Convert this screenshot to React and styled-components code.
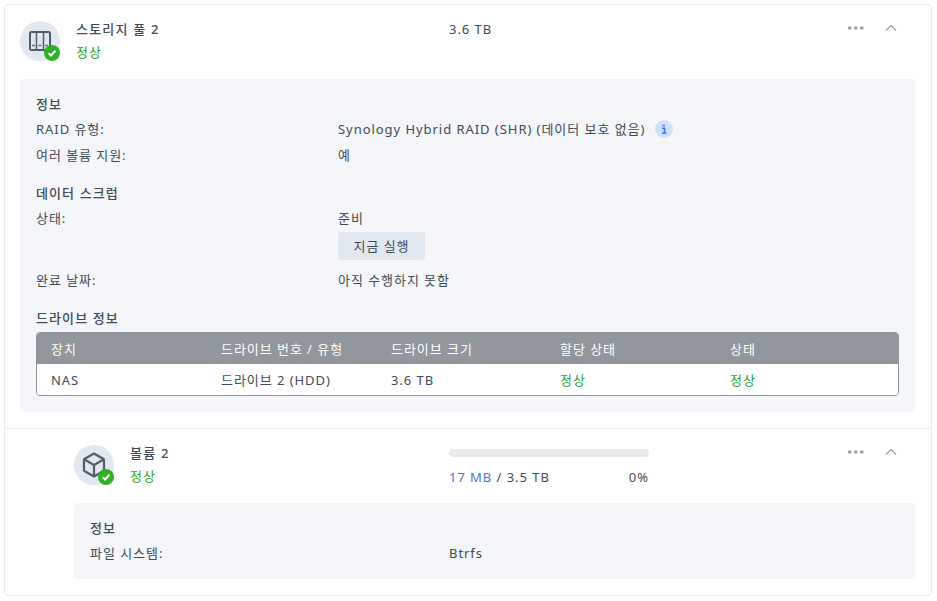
import React from "react";
import styled, { createGlobalStyle } from "styled-components";

const Global = createGlobalStyle`
  html, body { margin: 0; padding: 0; background: #fff; }
  body { font-family: "Noto Sans", "Noto Sans CJK KR", sans-serif; font-size: 13px; letter-spacing: 0.95px; color: #414b55; }
`;
const Page = styled.div`
  width: 937px; height: 601px; box-sizing: border-box; padding: 4px 5px 5px 4px; overflow: hidden;
`;
const Card = styled.div`
  height: 592px; box-sizing: border-box; border: 1px solid #e6ebf0; border-radius: 4px;
  display: flex; flex-direction: column;
`;
const Section = styled.section`
  padding: 16px 16px 16px ${p => p.$indent}px;
  & + & { border-top: 1px solid #e9ecf0; }
`;
const Head = styled.div`
  display: grid; grid-template-columns: ${p => p.$info}px 200px 1fr; height: 58px; align-items: start;
`;
const Identity = styled.div`display: flex; gap: 16px;`;
const IconWrap = styled.div`
  position: relative; width: 40px; height: 40px; border-radius: 50%; background: #e2e8ef; flex: none;
  display: flex; align-items: center; justify-content: center;
`;
const Badge = styled.span`
  position: absolute; right: 0; bottom: 0; width: 16px; height: 16px; border-radius: 50%; background: #2fb124;
  display: flex; align-items: center; justify-content: center;
`;
const Names = styled.div`display: flex; flex-direction: column; gap: 5px; margin-top: -1px;`;
const Title = styled.div`font-weight: 500; letter-spacing: 1.2px; line-height: 18px; color: #414b55;`;
const Green = styled.div`color: #28a61e; line-height: 18px;`;
const SizeText = styled.div`line-height: 18px; margin-top: -1px;`;
const Usage = styled.div`display: flex; flex-direction: column; gap: 11px; padding-top: 4px;`;
const Track = styled.div`width: 200px; height: 8px; border-radius: 4px; background: #e8e9eb;`;
const UsageText = styled.div`display: flex; justify-content: space-between; line-height: 18px;`;
const Used = styled.span`color: #4c74d8;`;
const Actions = styled.div`display: flex; justify-content: flex-end; align-items: center; gap: 21px; height: 14px; padding-right: 18px;`;
const Panel = styled.div`
  background: #f4f6fa; border-radius: 4px; padding: 16px 16px ${p => p.$tail || 16}px;
`;
const Group = styled.div`
  & + & { margin-top: ${p => p.$gap || 22}px; }
`;
const GroupTitle = styled.div`font-weight: 500; letter-spacing: 1.1px; line-height: 18px; margin-bottom: ${p => p.$after || 7}px;`;
const Row = styled.div`
  display: grid; grid-template-columns: ${p => p.$label}px 1fr; line-height: 18px; & + & { margin-top: 8px; }
`;
const Value = styled.div`display: flex; align-items: center; gap: 10px;`;
const Stack = styled.div`display: flex; flex-direction: column; align-items: flex-start; gap: 5px; padding-bottom: 3px;`;
const Button = styled.button`
  height: 28px; width: 87px; padding: 0; border: 0; border-radius: 3px; background: #e2e8ef; color: #414b55;
  font: inherit; letter-spacing: inherit; line-height: 28px;
`;
const InfoDot = styled.span`
  width: 18px; height: 18px; border-radius: 50%; background: #cfe1fa; display: inline-flex; align-items: center; justify-content: center;
`;
const Table = styled.div`
  border: 1px solid #8f949b; border-radius: 4px; overflow: hidden; background: #fff;
`;
const TRow = styled.div`
  display: grid; grid-template-columns: 170px 170px 169px 170px 1fr; padding-left: 14px; align-items: center;
  height: 31px; background: ${p => p.$head ? "#92969d" : "#fff"}; color: ${p => p.$head ? "#fff" : "#414b55"};
`;
const Ok = styled.span`color: #1f9e3e;`;

const Check = () => (
  <Badge>
    <svg width="10" height="10" viewBox="0 0 10 10"><path d="M1.600 5.200 4 7.500 8.400 2.800" fill="none" stroke="#fff" strokeWidth="2" /></svg>
  </Badge>
);
const Dots = () => (
  <svg width="16" height="4" viewBox="0 0 16 4"><g fill="#9ba1a8"><rect y="0.500" width="3.500" height="3" rx="1"/><rect x="6" y="0.500" width="3.500" height="3" rx="1"/><rect x="12" y="0.500" width="3.500" height="3" rx="1"/></g></svg>
);
const Chevron = () => (
  <svg width="12" height="8" viewBox="0 0 12 8"><path d="M1 6.500 6 1.500 11 6.500" fill="none" stroke="#a2a7ad" strokeWidth="1.400" /></svg>
);
const Nas = () => (
  <svg width="22" height="20" viewBox="0 0 22 20" fill="none">
    <rect x="1" y="1" width="20" height="18" rx="1.500" stroke="#555d68" strokeWidth="2" />
    <path d="M7.500 1v18M14.500 1v18" stroke="#555d68" strokeWidth="1.500" />
    <path d="M3 14.500h3M9.500 14.500h3M16 14.500h3" stroke="#6d747e" strokeWidth="1.500" />
  </svg>
);
const Cube = () => (
  <svg width="24" height="26" viewBox="0 0 24 26" fill="none" stroke="#555d68" strokeWidth="2.200">
    <path d="M12 1.500 22 7.300v11.400L12 24.500 2 18.700V7.300Z" strokeLinejoin="round" />
    <path d="M2 7.300 12 13l10-5.700M12 13v11.500" strokeLinejoin="round" />
  </svg>
);

export default function App() {
  return (
    <Page>
      <Global />
      <Card>
        <Section $indent={15}>
          <Head $info={429}>
            <Identity>
              <IconWrap><Nas /><Check /></IconWrap>
              <Names><Title>스토리지 풀 2</Title><Green>정상</Green></Names>
            </Identity>
            <SizeText>3.6 TB</SizeText>
            <Actions><Dots /><Chevron /></Actions>
          </Head>
          <Panel>
            <Group>
              <GroupTitle>정보</GroupTitle>
              <Row $label={302}><div>RAID 유형:</div>
                <Value>Synology Hybrid RAID (SHR) (데이터 보호 없음)
                  <InfoDot><svg width="6" height="10" viewBox="0 0 6 10"><path d="M1.500 1.500h2.500M1 4.200h2.500V9M1 9h4.500" fill="none" stroke="#2f7fe6" strokeWidth="1.600"/></svg></InfoDot>
                </Value>
              </Row>
              <Row $label={302}><div>여러 볼륨 지원:</div><Value>예</Value></Row>
            </Group>
            <Group>
              <GroupTitle>데이터 스크럽</GroupTitle>
              <Row $label={302}><div>상태:</div><Stack><div>준비</div><Button>지금 실행</Button></Stack></Row>
              <Row $label={302}><div>완료 날짜:</div><Value>아직 수행하지 못함</Value></Row>
            </Group>
            <Group $gap={20}>
              <GroupTitle $after={5}>드라이브 정보</GroupTitle>
              <Table>
                <TRow $head><span>장치</span><span>드라이브 번호 / 유형</span><span>드라이브 크기</span><span>할당 상태</span><span>상태</span></TRow>
                <TRow><span>NAS</span><span>드라이브 2 (HDD)</span><span>3.6 TB</span><Ok>정상</Ok><Ok>정상</Ok></TRow>
              </Table>
            </Group>
          </Panel>
        </Section>
        <Section $indent={69}>
          <Head $info={375}>
            <Identity>
              <IconWrap><Cube /><Check /></IconWrap>
              <Names><Title>볼륨 2</Title><Green>정상</Green></Names>
            </Identity>
            <Usage>
              <Track />
              <UsageText><span><Used>17 MB</Used> / 3.5 TB</span><span>0%</span></UsageText>
            </Usage>
            <Actions><Dots /><Chevron /></Actions>
          </Head>
          <Panel $tail={17}>
            <Group>
              <GroupTitle>정보</GroupTitle>
              <Row $label={359}><div>파일 시스템:</div><Value>Btrfs</Value></Row>
            </Group>
          </Panel>
        </Section>
      </Card>
    </Page>
  );
}
